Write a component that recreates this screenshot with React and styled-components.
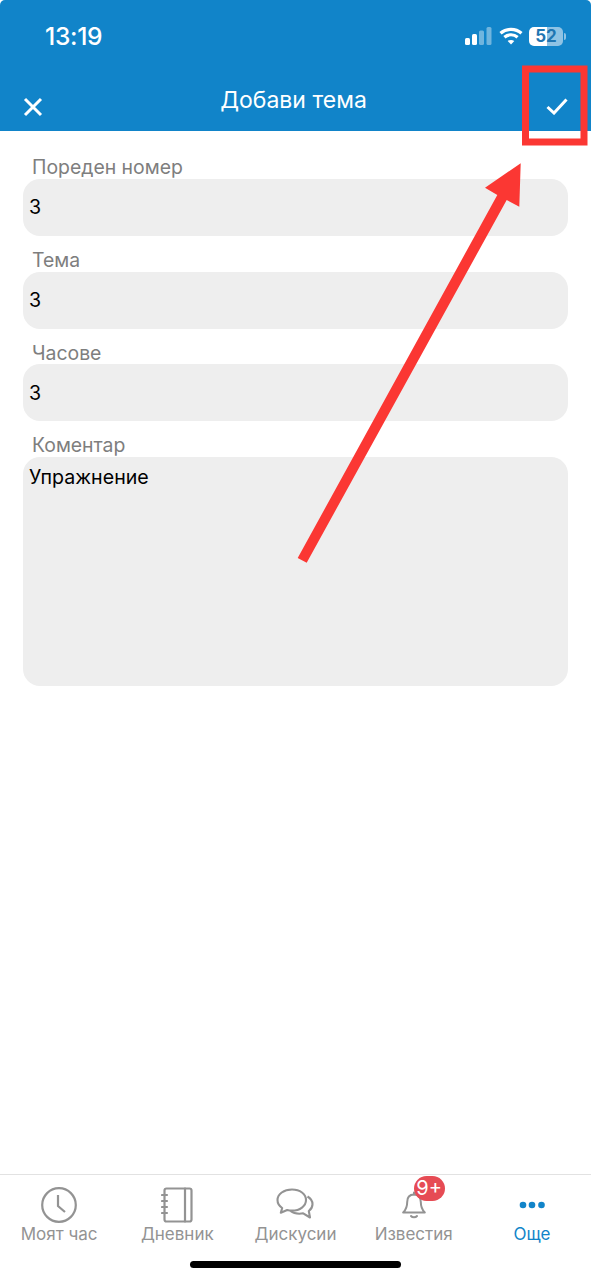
import React from "react";
import styled, { createGlobalStyle } from "styled-components";

const Global = createGlobalStyle`
  html, body { margin: 0; padding: 0; background: #fff; }
  * { box-sizing: border-box; }
`;
const Page = styled.div`
  position: relative; width: 591px; height: 1280px; display: flex; flex-direction: column;
  overflow: hidden; background: #fff; font-family: Inter, "Noto Sans", sans-serif;
`;
const Header = styled.header`
  background: #1184c9; color: #fff; height: 131px; border-radius: 5px 5px 0 0;
  display: flex; flex-direction: column;
`;
const StatusBar = styled.div`
  height: 72px; display: flex; align-items: center; justify-content: space-between; padding: 0 28px 0 45px;
`;
const Time = styled.span`font-size: 24.6px; font-weight: 500; letter-spacing: -0.3px;`;
const StatusIcons = styled.div`display: flex; align-items: center; gap: 6px;`;
const Battery = styled.div`
  position: relative; width: 34px; height: 19px; border-radius: 5px;
  background: linear-gradient(90deg, #fff 0 53%, #8fc3e4 53% 100%);
  color: #1f76b2; font-size: 17px; font-weight: 700; line-height: 19px; text-align: center;
  &::after { content: ""; position: absolute; left: 35px; top: 6px; width: 2px; height: 7px;
    border-radius: 0 2px 2px 0; background: #8fc3e4; }
`;
const NavBar = styled.div`
  flex: 1; display: grid; grid-template-columns: 1fr auto 1fr; align-items: center; padding: 0 23px;
`;
const NavLeft = styled.div`display: flex; padding-top: 10px;`;
const NavRight = styled(NavLeft)`justify-content: flex-end;`;
const Title = styled.h1`margin: 0 4px 3px 0; font-size: 23px; font-weight: 400; letter-spacing: 0;`;
const Form = styled.main`flex: 1; padding: 12.3px 23px 0; display: flex; flex-direction: column;`;
const Field = styled.div`display: flex; flex-direction: column;`;
const Label = styled.label`
  height: 35.7px; padding: 12px 0 0 9px; line-height: 24px; font-size: 19.4px; color: #7e7e7e;
`;
const Input = styled.div`
  height: ${p => p.$tall ? 229 : 57}px; border-radius: 17px; background: #eeeeee; color: #000; font-size: 19.6px;
  padding: ${p => p.$tall ? "8px 6px" : "0 6px"}; display: flex; align-items: ${p => p.$tall ? "flex-start" : "center"};
`;
const TabBar = styled.nav`
  height: 106px; border-top: 1px solid #e2e2e2; display: flex; flex-direction: column; background: #fff;
`;
const Tabs = styled.div`display: grid; grid-template-columns: repeat(5, 1fr); height: 86px;`;
const Tab = styled.div`
  display: flex; flex-direction: column; align-items: center; padding-top: 12px;
  color: ${p => p.$active ? "#1184c9" : "#939393"};
`;
const IconSlot = styled.div`position: relative; height: 36px; display: flex; align-items: center; justify-content: center;`;
const TabLabel = styled.span`font-size: 17px; line-height: 22px; white-space: nowrap;`;
const Badge = styled.span`
  position: absolute; left: 12px; top: -11px; width: 31px; height: 25px; border-radius: 13px;
  background: #e64b54; color: #fff; font-size: 20px; line-height: 25px; text-align: center;
`;
const HomeIndicator = styled.div`
  width: 211px; height: 7px; border-radius: 4px; background: #000; margin: 0 auto; 
`;
const Overlay = styled.svg`position: absolute; left: 0; top: 0; pointer-events: none;`;

const Signal = () => (
  <svg width="28" height="18" viewBox="0 0 28 18" fill="#fff">
    <rect x="0" y="11" width="5" height="7" rx="1.5" />
    <rect x="7" y="7" width="5" height="11" rx="1.5" />
    <rect x="14" y="3.5" width="5" height="14.5" rx="1.5" opacity=".4" />
    <rect x="21.5" y="0" width="5" height="18" rx="1.5" opacity=".4" />
  </svg>
);
const Wifi = () => (
  <svg width="24" height="18" viewBox="0 0 24 18" fill="none" stroke="#fff" strokeWidth="3.2">
    <path d="M1.5 6.3C7.4 1 16.6 1 22.5 6.3" />
    <path d="M5.4 10.2c3.8-3.3 9.4-3.3 13.2 0" />
    <path d="M12 17.6 8.7 14c2-1.500 4.600-1.500 6.600 0z" fill="#fff" stroke="none" />
  </svg>
);
const CloseIcon = () => (
  <svg width="20" height="20" viewBox="0 0 20 20" stroke="#fff" strokeWidth="3" fill="none">
    <path d="M2 2 18 18M18 2 2 18" />
  </svg>
);
const CheckIcon = () => (
  <svg width="22" height="17" viewBox="0 0 22 17" stroke="#fff" strokeWidth="3" fill="none">
    <path d="M1.500 9 8 15 20.500 1.500" />
  </svg>
);
const ClockIcon = () => (
  <svg width="36" height="36" viewBox="0 0 36 36" fill="none" stroke="currentColor" strokeWidth="2.2">
    <circle cx="18" cy="18" r="16.800" />
    <path d="M17 8v11l7 6" />
  </svg>
);
const NotebookIcon = () => (
  <svg width="32" height="36" viewBox="0 0 32 36" fill="none" stroke="currentColor" strokeWidth="2.2" strokeLinecap="round" strokeLinejoin="round">
    <rect x="3.500" y="1.500" width="27" height="33" rx="2" />
    <path d="M24 1.500v33" />
    <path d="M1 8h5M1 14h5M1 20h5M1 26h5" />
  </svg>
);
const ChatIcon = () => (
  <svg width="38" height="34" viewBox="0 0 38 34" fill="none" stroke="currentColor" strokeWidth="2.1" strokeLinejoin="round">
    <path d="M16 1.500C8 1.500 1.500 6 1.500 12c0 3.300 2 6.200 4.700 8l-1.400 4.700 6.400-2.700c1.500.4 3 .6 4.800.6 8 0 14-4.600 14-10.600S24 1.500 16 1.500z" />
    <path d="M31.500 8.500c3 1.800 5 4.600 5 7.700 0 2.800-1.500 5.100-3.700 6.800l1.200 6.500-6.800-4.200c-1.300.3-2.500.4-3.900.4-3.500 0-6.500-.9-8.800-2.700" />
  </svg>
);
const BellIcon = () => (
  <svg width="24" height="28" viewBox="0 0 24 28" fill="none" stroke="currentColor" strokeWidth="2" strokeLinejoin="round" strokeLinecap="round">
    <path d="M12 3.500c-4.400 0-6.800 3-6.800 7.500 0 5-1.500 8-4 10.500h21.600c-2.500-2.500-4-5.500-4-10.500 0-4.500-2.400-7.500-6.800-7.500z" />
    <path d="M12 1.500v2M9 25c1.500 1.800 4.500 1.800 6 0" />
  </svg>
);
const DotsIcon = () => (
  <svg width="26" height="8" viewBox="0 0 26 8" fill="currentColor">
    <circle cx="4" cy="4" r="3.300" /><circle cx="13" cy="4" r="3.300" /><circle cx="22.500" cy="4" r="3.300" />
  </svg>
);

const fields = [
  ["Пореден номер", "3"],
  ["Тема", "3"],
  ["Часове", "3"],
];

export default function App() {
  return (
    <Page>
      <Global />
      <Header>
        <StatusBar>
          <Time>13:19</Time>
          <StatusIcons>
            <Signal />
            <Wifi />
            <Battery>52</Battery>
          </StatusIcons>
        </StatusBar>
        <NavBar>
          <NavLeft><CloseIcon /></NavLeft>
          <Title>Добави тема</Title>
          <NavRight><CheckIcon /></NavRight>
        </NavBar>
      </Header>
      <Form>
        {fields.map(([label, value]) => (
          <Field key={label}>
            <Label>{label}</Label>
            <Input>{value}</Input>
          </Field>
        ))}
        <Field>
          <Label>Коментар</Label>
          <Input $tall>Упражнение</Input>
        </Field>
      </Form>
      <TabBar>
        <Tabs>
          <Tab><IconSlot><ClockIcon /></IconSlot><TabLabel>Моят час</TabLabel></Tab>
          <Tab><IconSlot><NotebookIcon /></IconSlot><TabLabel>Дневник</TabLabel></Tab>
          <Tab><IconSlot><ChatIcon /></IconSlot><TabLabel>Дискусии</TabLabel></Tab>
          <Tab><IconSlot><BellIcon /><Badge>9+</Badge></IconSlot><TabLabel>Известия</TabLabel></Tab>
          <Tab $active><IconSlot><DotsIcon /></IconSlot><TabLabel>Още</TabLabel></Tab>
        </Tabs>
        <HomeIndicator />
      </TabBar>
      <Overlay width="591" height="1280" viewBox="0 0 591 1280">
        <path d="M525.500 69H584V142H525.500z" fill="none" stroke="#fb3733" strokeWidth="7" />
        <path d="M520.700 163.300 519.300 206.700 506.700 200 306.700 562.700 297.700 558 497.300 195 485 187.700z" fill="#fb3733" />
      </Overlay>
    </Page>
  );
}
